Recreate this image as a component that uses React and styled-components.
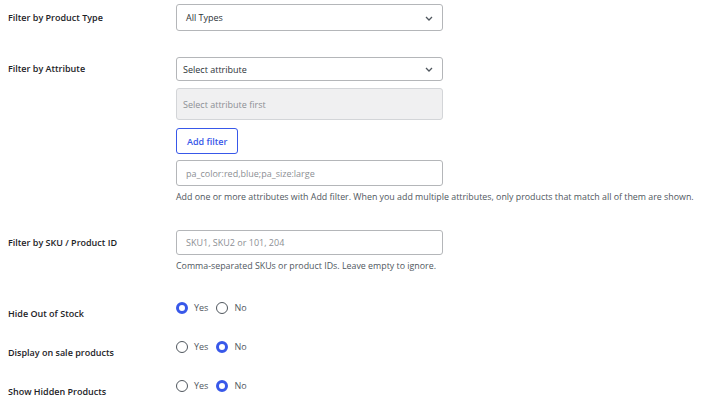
import styled, { createGlobalStyle } from "styled-components";

const GlobalStyle = createGlobalStyle`
  body {
    margin: 0;
    background: #ffffff;
    font-family: "Open Sans", "Noto Sans", sans-serif;
    color: #1d2327;
  }
`;

const Form = styled.div`
  display: flex;
  flex-direction: column;
  padding: 4px 8px 0;
`;

const Row = styled.div`
  display: grid;
  grid-template-columns: 168px 1fr;
  align-items: start;
  padding-bottom: ${props => props.$pb ?? 26}px;
`;

const Label = styled.div`
  padding-top: ${props => props.$pt || 6}px;
  font-size: 9px;
  line-height: 13px;
  font-weight: 600;
  color: #1d2327;
`;

const Field = styled.div`
  display: flex;
  flex-direction: column;
  align-items: flex-start;
  gap: ${props => props.$gap || 0}px;
`;

const SelectBox = styled.div`
  position: relative;
  box-sizing: border-box;
  width: 267px;
  height: ${props => props.$h}px;
  margin-bottom: ${props => props.$mb || 0}px;
  display: flex;
  align-items: center;
  padding-left: ${props => props.$pl}px;
  border: 1px solid #b4b6b9;
  border-radius: 3px;
  background: #fff;
  font-size: 9px;
  color: #2c3338;

  svg {
    position: absolute;
    right: 9px;
    top: 50%;
    margin-top: -2px;
  }
`;

const Input = styled.div`
  box-sizing: border-box;
  width: 267px;
  height: ${props => props.$h}px;
  margin-bottom: ${props => props.$mb || 0}px;
  display: flex;
  align-items: center;
  padding-left: ${props => props.$pl || 9}px;
  border: 1px solid ${props => (props.$disabled ? "#d3d5d8" : "#b4b6b9")};
  border-radius: 3px;
  background: ${props => (props.$disabled ? "#f0f0f1" : "#fff")};
  font-size: 9px;
  color: #8c8f94;
`;

const Button = styled.button`
  box-sizing: border-box;
  height: 26px;
  margin-bottom: 6px;
  padding: 0 10px;
  border: 1px solid #3858e9;
  border-radius: 3px;
  background: #fff;
  color: #3858e9;
  font-family: inherit;
  font-size: 9px;
  font-weight: 600;
  cursor: pointer;
`;

const Help = styled.p`
  margin: 0;
  font-size: 8.85px;
  line-height: 13px;
  color: #50575e;
  white-space: nowrap;
`;

const Radios = styled.div`
  display: flex;
  align-items: center;
  height: 13px;
`;

const Option = styled.label`
  display: flex;
  align-items: center;
  gap: 6px;
  margin-right: 8px;
  font-size: 9px;
  color: #50575e;
`;

const Dot = styled.span`
  box-sizing: border-box;
  width: 12px;
  height: 12px;
  border-radius: 50%;
  background: #fff;
  border: ${props => (props.$on ? "3.5px solid #3858e9" : "1px solid #50575e")};
`;

const Chevron = () => (
  <svg width="8" height="5" viewBox="0 0 8 5">
    <path d="M1 1l3 3 3-3" fill="none" stroke="#50575e" strokeWidth="1.3" />
  </svg>
);

function YesNo({ value }) {
  return (
    <Radios>
      <Option>
        <Dot $on={value === "yes"} />
        Yes
      </Option>
      <Option>
        <Dot $on={value === "no"} />
        No
      </Option>
    </Radios>
  );
}

export default function App() {
  return (
    <>
      <GlobalStyle />
      <Form>
        <Row>
          <Label $pt={7}>Filter by Product Type</Label>
          <Field>
            <SelectBox $h={27} $pl={9}>
              All Types
              <Chevron />
            </SelectBox>
          </Field>
        </Row>
        <Row>
          <Label $pt={5}>Filter by Attribute</Label>
          <Field>
            <SelectBox $h={24} $pl={6} $mb={7}>
              Select attribute
              <Chevron />
            </SelectBox>
            <Input $h={32} $pl={6} $mb={8} $disabled>
              Select attribute first
            </Input>
            <Button type="button">Add filter</Button>
            <Input $h={26} $mb={5}>pa_color:red,blue;pa_size:large</Input>
            <Help>
              Add one or more attributes with Add filter. When you add multiple attributes, only
              products that match all of them are shown.
            </Help>
          </Field>
        </Row>
        <Row $pb={28}>
          <Label>Filter by SKU / Product ID</Label>
          <Field $gap={5}>
            <Input $h={25}>SKU1, SKU2 or 101, 204</Input>
            <Help>Comma-separated SKUs or product IDs. Leave empty to ignore.</Help>
          </Field>
        </Row>
        <Row $pb={20}>
          <Label>Hide Out of Stock</Label>
          <YesNo value="yes" />
        </Row>
        <Row $pb={20}>
          <Label>Display on sale products</Label>
          <YesNo value="no" />
        </Row>
        <Row $pb={0}>
          <Label>Show Hidden Products</Label>
          <YesNo value="no" />
        </Row>
      </Form>
    </>
  );
}
